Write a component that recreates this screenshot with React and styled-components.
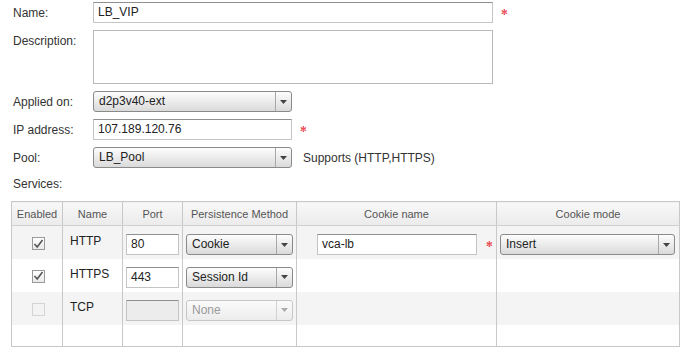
import React from "react";
import styled, { createGlobalStyle } from "styled-components";

const GlobalStyle = createGlobalStyle`
  body {
    margin: 0;
    background: #fff;
    font-family: "Liberation Sans", Arial, sans-serif;
    font-size: 12px;
    color: #333;
  }
`;

const Page = styled.div`
  width: 684px;
  height: 356px;
  overflow: hidden;
  box-sizing: border-box;
  padding-top: 2px;
`;

const Form = styled.div`
  display: grid;
  grid-template-columns: 80px 1fr;
  row-gap: 7px;
  padding-left: 13px;
`;

const Label = styled.div`
  display: flex;
  align-items: ${(p) => (p.top ? "flex-start" : "center")};
  padding-top: ${(p) => (p.top ? "4px" : "0")};
  line-height: 14px;
  color: #333;
`;

const Field = styled.div`
  display: flex;
  align-items: center;
`;

const TextBox = styled.div`
  box-sizing: border-box;
  width: ${(p) => p.w}px;
  height: ${(p) => p.h || 21}px;
  border: 1px solid #c4c4c4;
  border-top-color: #8f8f8f;
  background: ${(p) => (p.disabled ? "#ececec" : "#fff")};
  padding: 0 4px;
  line-height: 19px;
  color: #222;
  white-space: nowrap;
`;

const TextArea = styled.div`
  box-sizing: border-box;
  width: 400px;
  height: 54px;
  border: 1px solid #b8b8b8;
  background: #fff;
`;

const SelectBox = styled.div`
  box-sizing: border-box;
  display: flex;
  width: ${(p) => p.w}px;
  height: 21px;
  border: 1px solid ${(p) => (p.disabled ? "#c6c6c6" : "#8a8a8a")};
  border-radius: 3px;
  background: ${(p) =>
    p.disabled
      ? "linear-gradient(#fbfbfb, #ececec)"
      : "linear-gradient(#fdfdfd, #dadada)"};
  color: ${(p) => (p.disabled ? "#9a9a9a" : "#222")};
`;

const SelectText = styled.div`
  flex: 1;
  padding-left: 5px;
  line-height: 19px;
  white-space: nowrap;
`;

const ArrowBox = styled.div`
  width: 15px;
  display: flex;
  align-items: center;
  justify-content: center;
  border-left: 1px solid ${(p) => (p.disabled ? "#d2d2d2" : "#a8a8a8")};
`;

const Required = styled.span`
  margin-left: ${(p) => p.gap || 8}px;
  color: #e8202a;
  font-family: "DejaVu Sans", sans-serif;
  font-size: 8px;
  line-height: 8px;
`;

const Note = styled.span`
  margin-left: 11px;
  color: #333;
`;

const Section = styled.div`
  grid-column: 1 / 3;
  height: 19px;
  line-height: 19px;
  color: #333;
`;

const TableWrap = styled.div`
  margin: 7px 0 0 11px;
`;

const Table = styled.table`
  width: 668px;
  table-layout: fixed;
  border-collapse: collapse;
  border: 1px solid #c8c8c8;
`;

const Th = styled.th`
  height: 23px;
  padding: 0;
  font-weight: normal;
  font-size: 11px;
  color: #555;
  text-align: center;
  background: linear-gradient(#f8f8f8, #ebebeb);
  border-left: 1px solid #c8c8c8;
  border-bottom: 1px solid #cfcfcf;
`;

const Tr = styled.tr`
  background: ${(p) => (p.shaded ? "#f4f4f4" : "#fff")};
`;

const Td = styled.td`
  height: ${(p) => (p.short ? 22 : 33)}px;
  box-sizing: border-box;
  padding: 8px 0 0 ${(p) => p.pl || 3}px;
  vertical-align: top;
  text-align: ${(p) => (p.center ? "center" : "left")};
  border-left: 1px solid #c8c8c8;
  line-height: 14px;
  color: #222;
`;

const CellRow = styled.div`
  display: flex;
  align-items: center;
`;

const Check = styled.span`
  display: inline-flex;
  align-items: center;
  justify-content: center;
  box-sizing: border-box;
  width: 13px;
  height: 13px;
  margin-top: 3px;
  border: 1px solid ${(p) => (p.disabled ? "#d4d4d4" : "#9a9a9a")};
  background: ${(p) =>
    p.disabled ? "#f3f3f3" : "linear-gradient(#ffffff, #e9e9e9)"};
`;

const Arrow = ({ disabled }) => (
  <svg width="7" height="4" viewBox="0 0 7 4">
    <polygon points="0,0 7,0 3.5,4" fill={disabled ? "#aaa" : "#444"} />
  </svg>
);

const Select = ({ w, value, disabled }) => (
  <SelectBox w={w} disabled={disabled}>
    <SelectText>{value}</SelectText>
    <ArrowBox disabled={disabled}>
      <Arrow disabled={disabled} />
    </ArrowBox>
  </SelectBox>
);

const CheckBox = ({ checked, disabled }) => (
  <Check disabled={disabled}>
    {checked && (
      <svg width="11" height="10" viewBox="0 0 11 10">
        <path
          d="M1.5 5 L4.2 8 L9.5 1"
          fill="none"
          stroke="#555"
          strokeWidth="1.6"
        />
      </svg>
    )}
  </Check>
);

const services = [
  { name: "HTTP", port: "80", method: "Cookie", enabled: true, cookie: true },
  { name: "HTTPS", port: "443", method: "Session Id", enabled: true },
  { name: "TCP", port: "", method: "None", disabled: true },
];

const App = () => {
  return (
    <Page>
      <GlobalStyle />
      <Form>
        <Label>Name:</Label>
        <Field>
          <TextBox w={400}>LB_VIP</TextBox>
          <Required>✻</Required>
        </Field>

        <Label top>Description:</Label>
        <Field>
          <TextArea />
        </Field>

        <Label>Applied on:</Label>
        <Field>
          <Select w={199} value="d2p3v40-ext" />
        </Field>

        <Label>IP address:</Label>
        <Field>
          <TextBox w={199}>107.189.120.76</TextBox>
          <Required gap={8}>✻</Required>
        </Field>

        <Label>Pool:</Label>
        <Field>
          <Select w={199} value="LB_Pool" />
          <Note>Supports (HTTP,HTTPS)</Note>
        </Field>

        <Section>Services:</Section>
      </Form>

      <TableWrap>
        <Table>
          <colgroup>
            <col style={{ width: 51 }} />
            <col style={{ width: 60 }} />
            <col style={{ width: 60 }} />
            <col style={{ width: 114 }} />
            <col style={{ width: 200 }} />
            <col style={{ width: 183 }} />
          </colgroup>
          <thead>
            <tr>
              <Th>Enabled</Th>
              <Th>Name</Th>
              <Th>Port</Th>
              <Th>Persistence Method</Th>
              <Th>Cookie name</Th>
              <Th>Cookie mode</Th>
            </tr>
          </thead>
          <tbody>
            {services.map((s, i) => (
              <Tr key={s.name} shaded={i % 2 === 0}>
                <Td center pl={0}>
                  <CheckBox checked={s.enabled} disabled={s.disabled} />
                </Td>
                <Td pl={7}>{s.name}</Td>
                <Td>
                  <TextBox w={53} disabled={s.disabled}>
                    {s.port}
                  </TextBox>
                </Td>
                <Td>
                  <Select w={107} value={s.method} disabled={s.disabled} />
                </Td>
                <Td pl={20}>
                  {s.cookie && (
                    <CellRow>
                      <TextBox w={160}>vca-lb</TextBox>
                      <Required gap={9}>✻</Required>
                    </CellRow>
                  )}
                </Td>
                <Td>{s.cookie && <Select w={175} value="Insert" />}</Td>
              </Tr>
            ))}
            <Tr>
              <Td short />
              <Td short />
              <Td short />
              <Td short />
              <Td short />
              <Td short />
            </Tr>
          </tbody>
        </Table>
      </TableWrap>
    </Page>
  );
};

export default App;
